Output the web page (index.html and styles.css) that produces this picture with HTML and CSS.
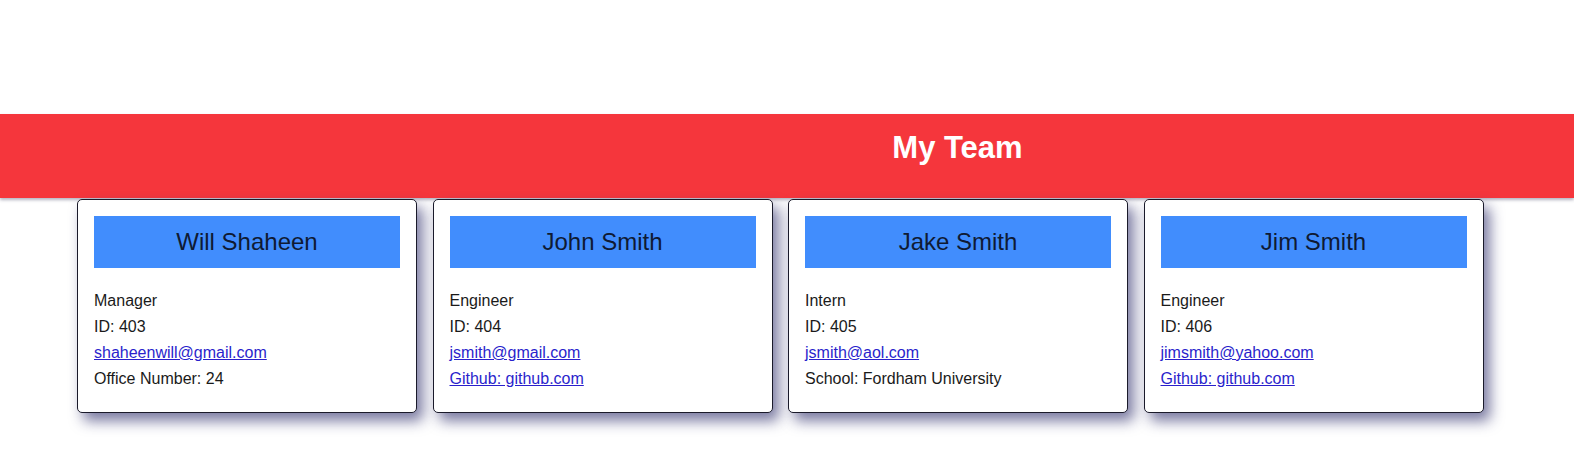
FILE: index.html
```html
<!DOCTYPE html>
<html>
<head>
<meta charset="utf-8">
<title>My Team</title>
<link rel="stylesheet" href="styles.css">
</head>
<body>
<header class="banner">
  <h1 class="banner-title">My Team</h1>
</header>
<main class="team">
  <section class="card">
    <h2 class="card-name">Will Shaheen</h2>
    <ul class="card-info">
      <li>Manager</li>
      <li>ID: 403</li>
      <li><a href="#">shaheenwill@gmail.com</a></li>
      <li>Office Number: 24</li>
    </ul>
  </section>
  <section class="card">
    <h2 class="card-name">John Smith</h2>
    <ul class="card-info">
      <li>Engineer</li>
      <li>ID: 404</li>
      <li><a href="#">jsmith@gmail.com</a></li>
      <li><a href="#">Github: github.com</a></li>
    </ul>
  </section>
  <section class="card">
    <h2 class="card-name">Jake Smith</h2>
    <ul class="card-info">
      <li>Intern</li>
      <li>ID: 405</li>
      <li><a href="#">jsmith@aol.com</a></li>
      <li>School: Fordham University</li>
    </ul>
  </section>
  <section class="card">
    <h2 class="card-name">Jim Smith</h2>
    <ul class="card-info">
      <li>Engineer</li>
      <li>ID: 406</li>
      <li><a href="#">jimsmith@yahoo.com</a></li>
      <li><a href="#">Github: github.com</a></li>
    </ul>
  </section>
</main>
</body>
</html>
```
FILE: styles.css
```css
html, body {
  margin: 0;
  padding: 0;
  background: #ffffff;
  font-family: "Liberation Sans", Arial, sans-serif;
  color: #1a1a1a;
}

body {
  min-height: 460px;
}

.banner {
  margin-top: 114px;
  height: 84px;
  background: #f5363c;
  box-shadow: 0 2px 3px rgba(40, 40, 80, 0.35);
  box-sizing: border-box;
  padding: 16px 0 0 341px;
  position: relative;
  z-index: 0;
}

.banner-title {
  margin: 0;
  text-align: center;
  color: #ffffff;
  font-size: 31px;
  font-weight: bold;
  line-height: 36px;
}

.team {
  display: flex;
  gap: 15.5px;
  padding: 0 0 0 77px;
  margin-top: 1px;
  position: relative;
  z-index: 1;
}

.card {
  width: 340px;
  box-sizing: border-box;
  background: #ffffff;
  border: 1px solid #1a1a2a;
  border-radius: 5px;
  padding: 16px 16px 20px 16px;
  box-shadow: 6px 8px 14px rgba(50, 50, 110, 0.65);
}

.card-name {
  margin: 0;
  height: 52px;
  line-height: 52px;
  background: #418dfd;
  color: #0f1a33;
  text-align: center;
  font-size: 24px;
  font-weight: normal;
}

.card-info {
  list-style: none;
  margin: 20px 0 0 0;
  padding: 0;
  font-size: 16px;
  line-height: 26px;
  color: #1a1a1a;
}

.card-info a {
  color: #2a1fcc;
  text-decoration: underline;
}
```
